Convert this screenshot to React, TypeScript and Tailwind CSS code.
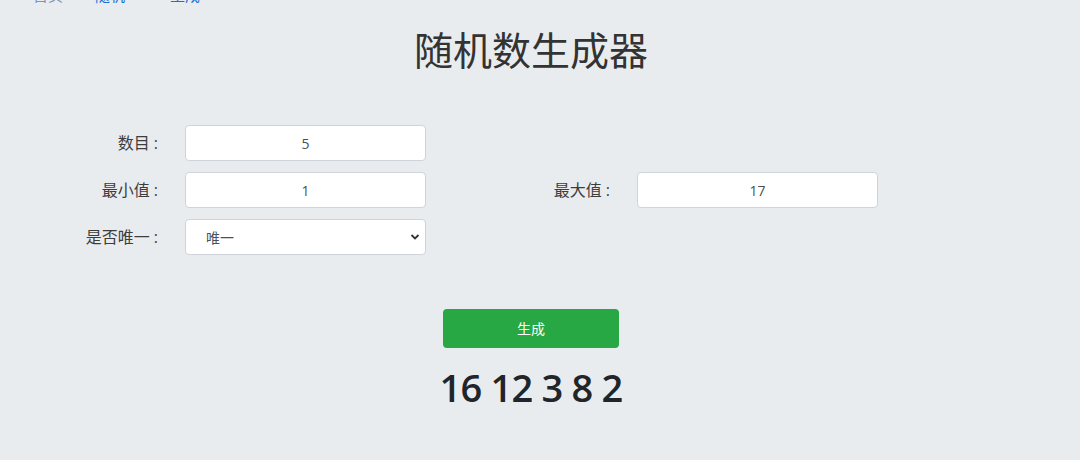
import React from "react";

const font = { fontFamily: '"Open Sans", "Noto Sans CJK SC", sans-serif' };

function Field({ label, value }: { label: string; value: string }) {
  return (
    <div className="flex items-center">
      <label className="w-[98px] text-right text-[16px] text-[#3d3d3d]">{label}</label>
      <input
        readOnly
        value={value}
        className="ml-[27px] h-[36px] w-[241px] rounded-[4px] border border-[#ced4da] bg-white text-center text-[14px] text-[#495057] outline-none"
      />
    </div>
  );
}

export default function App() {
  return (
    <div className="h-[460px] w-[1080px] overflow-hidden bg-[#e9ecef]" style={font}>
      <div className="w-[1062px]">
        {/* breadcrumb scrolled almost out of view */}
        <div className="h-[5px] overflow-hidden">
          <div className="-mt-[15px] flex pl-[33px] text-[15px] leading-[20px]">
            <span className="text-[#7d93b8]">首页</span>
            <span className="ml-[32px] text-[#1a6fd6]">随机</span>
            <span className="ml-[45px] text-[#1a6fd6]">生成</span>
          </div>
        </div>

        <h1 className="pt-[22px] text-center text-[39px] leading-[46px] text-[#333]">随机数生成器</h1>

        <div className="mt-[52px] ml-[60px] flex flex-col gap-[11px]">
          <Field label="数目 :" value="5" />
          <div className="flex items-center gap-[86px]">
            <Field label="最小值 :" value="1" />
            <Field label="最大值 :" value="17" />
          </div>
          <div className="flex items-center">
            <label className="w-[98px] text-right text-[16px] text-[#3d3d3d]">是否唯一 :</label>
            <div className="relative ml-[27px] h-[36px] w-[241px]">
              <select
                defaultValue="唯一"
                className="h-full w-full appearance-none rounded-[4px] border border-[#ced4da] bg-white pl-[20px] text-[14px] text-[#495057] outline-none"
              >
                <option>唯一</option>
                <option>不唯一</option>
              </select>
              <svg
                className="pointer-events-none absolute right-[6px] top-[14px]"
                width="10"
                height="8"
                viewBox="0 0 10 8"
              >
                <path d="M1.5 2 L5 5.5 L8.5 2" fill="none" stroke="#333" strokeWidth="1.8" />
              </svg>
            </div>
          </div>
        </div>

        <div className="mt-[54px] flex justify-center">
          <button className="h-[39px] w-[176px] rounded-[4px] bg-[#28a745] text-[14px] text-white">生成</button>
        </div>

        <div className="mt-[13px] text-center text-[38px] font-semibold leading-[52px] tracking-[-0.8px] text-[#212529]">
          16 12 3 8 2
        </div>
      </div>
    </div>
  );
}
